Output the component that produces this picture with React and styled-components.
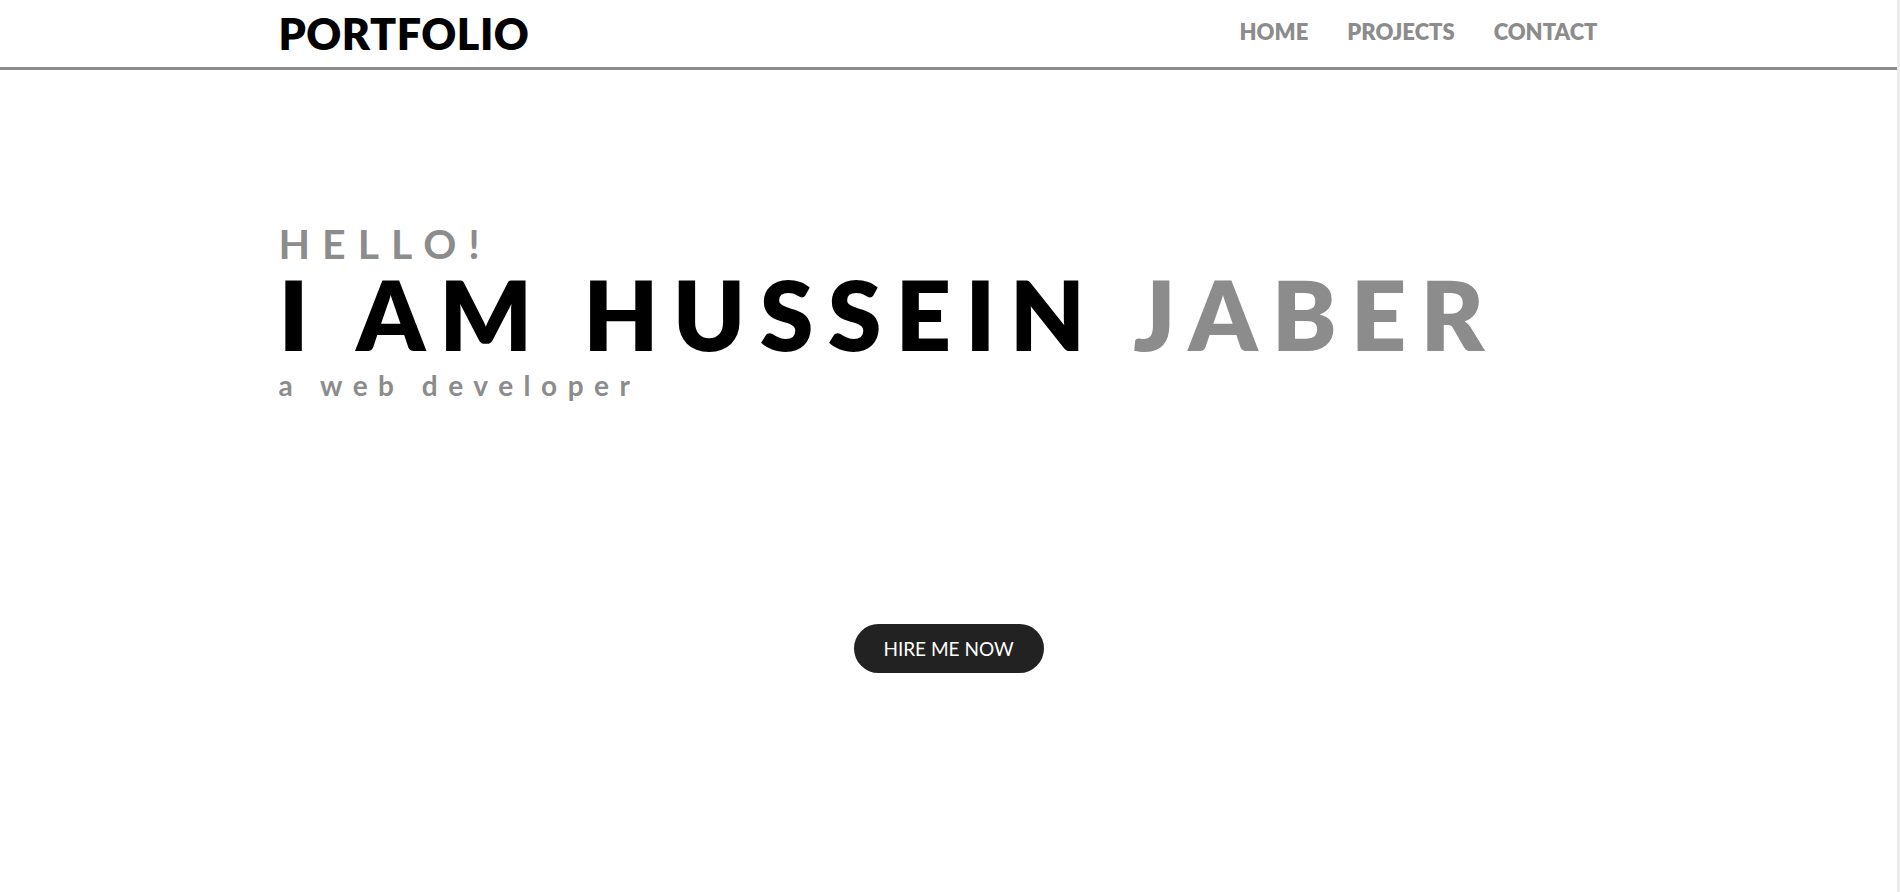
import { createGlobalStyle, styled } from "styled-components";

const GlobalStyle = createGlobalStyle`
  html, body {
    margin: 0;
    padding: 0;
    background: #fff;
  }
  body {
    font-family: Lato, "Open Sans", sans-serif;
  }
`;

const Page = styled.div`
  min-height: 100vh;
  border-right: 3px solid #ececec;
  box-sizing: border-box;
`;

const Header = styled.header`
  height: 67px;
  border-bottom: 3px solid #8c8c8c;
`;

const Container = styled.div`
  width: 1320px;
  margin-left: calc(50% - 670px);
`;

const HeaderInner = styled(Container)`
  height: 100%;
  display: flex;
  align-items: center;
  justify-content: space-between;
`;

const Logo = styled.h1`
  margin: 0;
  color: #000;
  font-size: 43px;
  font-weight: 800;
  letter-spacing: 0.5px;
  line-height: 1;
`;

const Nav = styled.nav`
  display: flex;
  gap: 39px;
  margin-right: 1px;
  padding-bottom: 4px;
`;

const NavLink = styled.a`
  color: #8c8c8c;
  font-size: 22px;
  font-weight: 800;
  text-decoration: none;
  cursor: pointer;
`;

const Hero = styled(Container)`
  padding-top: 153px;
`;

const Greeting = styled.h3`
  margin: 0;
  color: #8c8c8c;
  font-size: 41px;
  font-weight: 700;
  letter-spacing: 12px;
  line-height: 1;
`;

const Title = styled.h1`
  margin: 1px 0 0;
  color: #000;
  font-size: 97px;
  font-weight: 800;
  letter-spacing: 14.2px;
  line-height: 1;
`;

const Surname = styled.span`
  color: #8c8c8c;
`;

const Role = styled.p`
  margin: 9px 0 0;
  color: #8c8c8c;
  font-size: 28px;
  font-weight: 700;
  letter-spacing: 10.5px;
  line-height: 1;
`;

const Actions = styled.div`
  display: flex;
  justify-content: center;
  padding-top: 225px;
`;

const HireButton = styled.button`
  width: 190px;
  height: 49px;
  border: none;
  outline: none;
  border-radius: 25px;
  background-color: #222;
  color: #fff;
  font-family: Lato, sans-serif;
  font-size: 19px;
  font-weight: 400;
  cursor: pointer;
`;

const App = () => {
  return (
    <Page>
      <GlobalStyle />
      <Header>
        <HeaderInner>
          <Logo>PORTFOLIO</Logo>
          <Nav>
            <NavLink>HOME</NavLink>
            <NavLink>PROJECTS</NavLink>
            <NavLink>CONTACT</NavLink>
          </Nav>
        </HeaderInner>
      </Header>
      <Hero>
        <Greeting>HELLO!</Greeting>
        <Title>
          I AM HUSSEIN <Surname>JABER</Surname>
        </Title>
        <Role>a web developer</Role>
      </Hero>
      <Actions>
        <HireButton>HIRE ME NOW</HireButton>
      </Actions>
    </Page>
  );
};

export default App;
